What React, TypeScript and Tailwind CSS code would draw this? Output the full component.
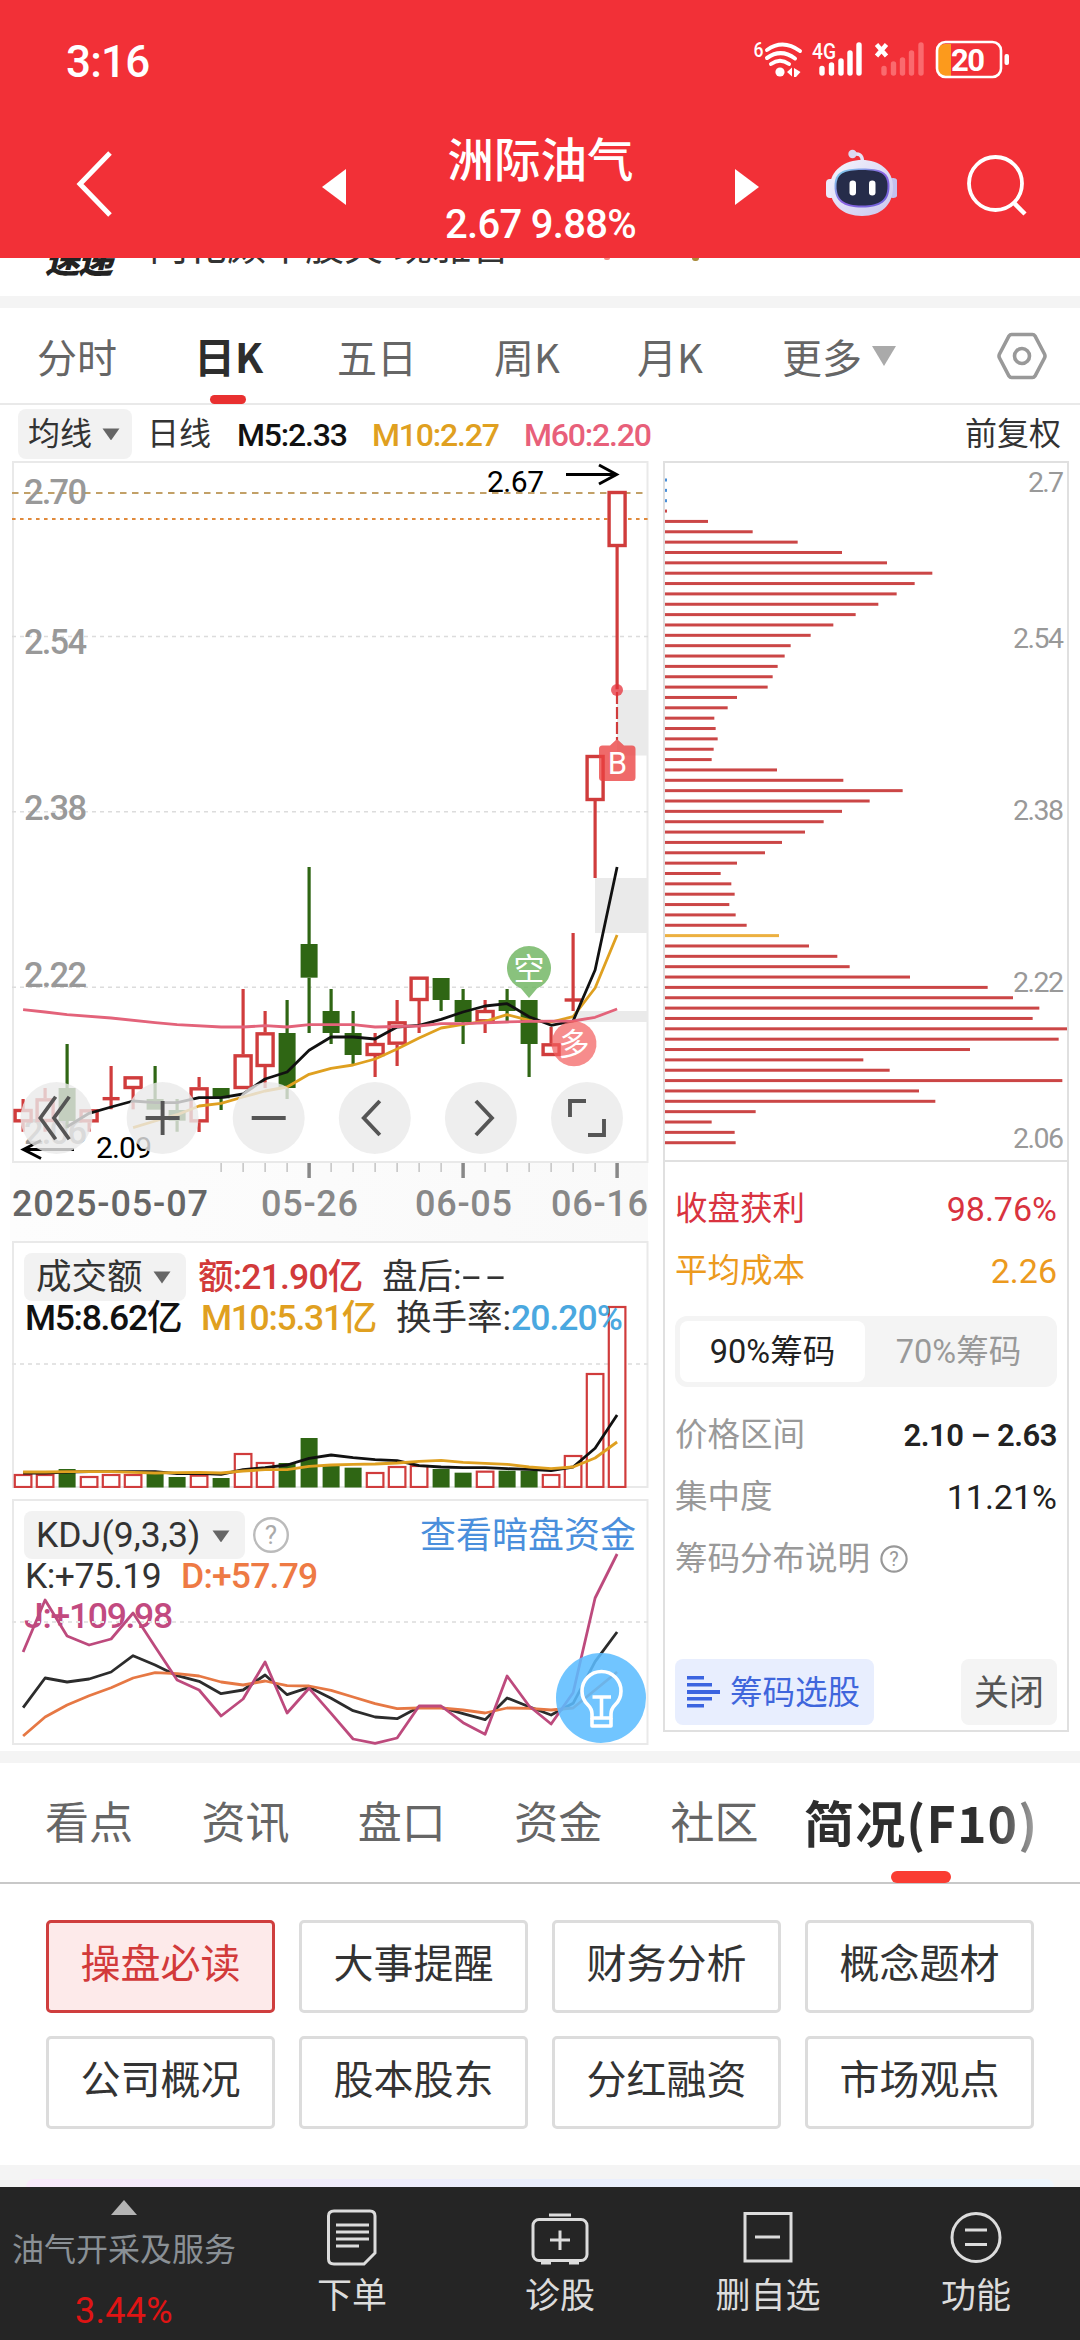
import React from "react";

/* ---------- chart data ---------- */

const X0 = 23.1;
const STEP = 22;
const cx = (i: number) => X0 + STEP * i;

type Candle = { up: boolean; top: number; bot: number; high: number; low: number };
const k = (up: boolean, top: number, bot: number, high = top, low = bot): Candle => ({ up, top, bot, high, low });

/* thirds of a pixel below y = 840 */
const candles: Candle[] = [
  k(true, 807, 847, 777, 875),
  k(true, 775, 846, 744, 875),
  k(false, 744, 843, 612, 865),
  k(true, 808, 847, 808, 875),
  k(true, 776, 776, 678, 808),
  k(true, 709, 747, 709, 808),
  k(false, 777, 809, 678, 809),
  k(false, 810, 842, 777, 875),
  k(true, 742, 847, 711, 876),
  k(false, 744, 775, 744, 810),
  k(true, 643, 747, 447, 747),
  k(true, 577, 681, 513, 744),
  k(false, 579, 744, 480, 777),
  k(false, 312, 413, 81, 579),
  k(false, 513, 579, 447, 612),
  k(false, 579, 645, 513, 672),
  k(true, 609, 648, 579, 711),
  k(true, 544, 614, 480, 678),
  k(true, 410, 483, 410, 579),
  k(false, 414, 480, 414, 513),
  k(false, 480, 546, 447, 612),
  k(true, 510, 547, 480, 579),
  k(false, 480, 513, 447, 544),
  k(false, 480, 612, 480, 711),
  k(true, 610, 648, 561, 648),
  k(true, 480, 480, 279, 513),
  k(true, -255, -117, -255, 114),
  k(true, -1047, -879, -1047, -452),
];

const ma60: [number, number][] = [
  [0, 509], [1, 516], [2, 524], [4, 534], [6, 548], [7, 554], [9, 561], [10, 561], [11, 557], [12, 561], [13, 554],
  [15, 554], [16, 561], [18, 558], [19, 551], [20, 551], [22, 546], [23, 544], [25, 543], [26, 532], [27, 507],
];
const ma5: [number, number][] = [
  860, 820, 801, 783, 788, 788, 773, 773, 762, 717, 696, 631, 591, 591, 597, 561, 556, 538, 516, 498, 491, 530, 556,
  543, 390, 81,
].map((v, i) => [i + 2, v]);
const ma10: [number, number][] = [
  863, 843, 824, 798, 790, 771, 753, 741, 703, 685, 675, 657, 627, 594, 564, 553, 544, 524, 541, 546, 530, 444, 285,
].map((v, i) => [i + 5, v]);

const volume: [boolean, number][] = [
  [true, 732], [true, 732], [false, 717], [true, 738], [true, 732], [true, 732], [false, 728], [false, 741],
  [true, 734], [false, 744], [true, 669], [true, 696], [false, 699], [false, 624], [false, 708], [false, 713],
  [true, 726], [true, 708], [true, 705], [false, 717], [false, 728], [true, 722], [false, 722], [false, 722],
  [true, 732], [true, 675], [true, 429], [true, 228],
];
const vol5 = [729, 729, 726, 725, 725, 725, 725, 731, 730, 733, 719, 713, 705, 685, 675, 683, 689, 692, 707, 711, 713, 713, 716, 718, 722, 711, 655, 555];
const vol10 = [726, 726, 725, 725, 725, 727, 729, 728, 727, 729, 723, 719, 719, 709, 705, 703, 702, 699, 694, 691, 697, 700, 703, 711, 716, 711, 684, 636];

const kLine = [653, 564, 576, 567, 546, 497, 525, 557, 574, 611, 600, 555, 614, 592, 625, 662, 681, 686, 651, 652, 671, 689, 624, 650, 675, 640, 515, 426];
const dLine = [738, 681, 645, 617, 593, 564, 548, 551, 558, 576, 585, 573, 587, 588, 601, 621, 641, 656, 654, 654, 660, 669, 654, 655, 660, 654, 600, 546];
const jLine = [486, 330, 438, 465, 447, 369, 470, 570, 600, 678, 627, 516, 669, 595, 670, 747, 760, 744, 648, 648, 698, 733, 558, 648, 702, 608, 324, 192];

const chipEnds = [
  48, 48, 48, 49, 174, 308, 443, 576, 711, 847, 794, 740, 685, 617, 550, 482, 422, 404, 383, 368, 353, 261, 233, 193,
  197, 203, 191, 185, 381, 580, 758, 659, 576, 521, 465, 396, 345, 261, 212, 244, 254, 238, 257, 290, 387, 477, 562,
  599, 780, 1013, 1089, 1168, 1148, 1251, 1226, 960, 640, 719, 1237, 807, 856, 317, 185, 254, 257,
];

const line = (pts: [number, number][], base: number) =>
  pts.map(([i, v]) => `${cx(i).toFixed(1)},${(base + v / 3).toFixed(1)}`).join(" ");
const series = (v: number[], base: number) => line(v.map((y, i) => [i, y]), base);

const RED = "#d03c3c";
const GREEN = "#2f6614";

/* ---------- small pieces ---------- */

function Caret({ size = 18, color = "#666" }: { size?: number; color?: string }) {
  return (
    <svg width={size} height={size * 0.72} viewBox="0 0 18 13">
      <path d="M0.5 0.5H17.5L9 12.5Z" fill={color} />
    </svg>
  );
}

function StatusIcons() {
  return (
    <svg width="260" height="48" viewBox="752 36 260 48" fontFamily="Roboto, sans-serif">
      <text x="753.5" y="57" fontSize="20" fontWeight="500" fill="#fff" textLength="10" lengthAdjust="spacingAndGlyphs">6</text>
      <g fill="none" stroke="#fff" strokeWidth="4" strokeLinecap="round">
        <path d="M767 50Q783 38.500 800 51" />
        <path d="M767 58Q781 48 795 58.500" />
        <path d="M771 64Q780 57.500 789 64" />
      </g>
      <circle cx="780" cy="72" r="4.600" fill="#fff" />
      <path d="M787 72l5-4.500v9zM794 68l6.500 4-4.500 5h-2z" fill="#fff" />
      <text x="812" y="59" fontSize="22" fontWeight="500" fill="#fff" textLength="24" lengthAdjust="spacingAndGlyphs">4G</text>
      <g stroke="#fff" strokeWidth="5.400" strokeLinecap="round">
        <path d="M822 68.500v4.500M831.500 65v8M841 61v12M850 53v20M859 45v28" />
      </g>
      <path d="M876.500 44.500l10 11.500M886.500 44.500l-10 11.500" stroke="#fff" strokeWidth="4.400" />
      <g stroke="#fa6a6e" strokeWidth="5.400" strokeLinecap="round">
        <path d="M884 68.500v4.500M893.500 64v9M902.500 60v13M911.500 53v20M921 45v28" />
      </g>
      <path d="M951 44H945a7.500 7.500 0 0 0-7.500 8V69a7.500 7.500 0 0 0 7.500 7.500h6z" fill="#fc9a1c" />
      <rect x="937" y="42" width="64" height="35" rx="8.500" fill="none" stroke="#fff" strokeWidth="2.600" />
      <text x="951" y="70.500" fontSize="31" fontWeight="700" fill="#fff" textLength="34">20</text>
      <rect x="1004.500" y="54" width="4.500" height="11" rx="2" fill="#fff" />
    </svg>
  );
}

function Robot() {
  return (
    <svg width="72" height="68" viewBox="824 149 72 68">
      <defs>
        <linearGradient id="shell" x1="0" y1="0" x2="1" y2="1">
          <stop offset="0" stopColor="#f6f5fd" />
          <stop offset="1" stopColor="#c9c6ee" />
        </linearGradient>
        <linearGradient id="visor" x1="0" y1="0" x2="1" y2="1">
          <stop offset="0" stopColor="#7fe0ee" />
          <stop offset="0.500" stopColor="#8a62e0" />
          <stop offset="1" stopColor="#6a63d8" />
        </linearGradient>
      </defs>
      <path d="M852 154.500Q861 152 861.500 161" fill="none" stroke="#e6e2f4" strokeWidth="3.500" />
      <circle cx="851.500" cy="154" r="4.200" fill="#dcd8f0" />
      <rect x="825" y="179" width="9" height="19" rx="4" fill="#eceafa" />
      <rect x="888" y="178" width="8.500" height="20" rx="4" fill="#c3c1ee" />
      <path d="M861 160C878 160 892 170 892 187C892 205 880 216 861 216C842 216 829 205 829 187C829 170 844 160 861 160Z" fill="url(#shell)" />
      <path d="M861 168.500C880 168.500 888.500 172 888.500 186C888.500 201 880 207.500 861 207.500C842 207.500 833.500 201 833.500 186C833.500 172 842 168.500 861 168.500Z" fill="url(#visor)" />
      <path d="M861 170C879 170 886.500 173.500 886.500 186C886.500 200 879 205.500 861 205.500C843 205.500 835.500 200 835.500 186C835.500 173.500 843 170 861 170Z" fill="#262c4a" />
      <rect x="848.500" y="180.500" width="6.500" height="15" rx="3.200" fill="#fff" />
      <rect x="868" y="180.500" width="6.500" height="15" rx="3.200" fill="#fff" />
    </svg>
  );
}

function Header() {
  return (
    <header className="h-[258px] bg-[#f23037] text-white">
      <div className="flex h-[120px] items-center justify-between pl-[66px] pr-[68px]">
        <span className="pt-[4px] text-[44px] font-medium leading-none tracking-[-0.8px]">3:16</span>
        <StatusIcons />
      </div>
      <div className="flex h-[138px] items-center pl-[76px]">
        <svg width="38" height="68" viewBox="0 0 38 68" className="mb-[10px]">
          <path d="M34 3L4 34L34 65" fill="none" stroke="#fff" strokeWidth="5" />
        </svg>
        <svg width="24" height="36" viewBox="0 0 24 36" className="ml-[208px] mb-[4px]">
          <path d="M24 0V36L0 18Z" fill="#fff" />
        </svg>
        <div className="flex w-[389px] flex-col items-center pt-[2px]">
          <span className="text-[46.5px] font-medium leading-[58px]">洲际油气</span>
          <span className="mt-[11px] text-[40px] font-medium leading-[48px] tracking-[-0.7px]">2.67 9.88%</span>
        </div>
        <svg width="24" height="36" viewBox="0 0 24 36" className="mb-[4px]">
          <path d="M0 0V36L24 18Z" fill="#fff" />
        </svg>
        <div className="ml-[66px] mb-[12px]">
          <Robot />
        </div>
        <svg width="62" height="62" viewBox="0 0 62 62" className="ml-[70px] mb-[7px]">
          <circle cx="28.500" cy="28.500" r="26.500" fill="none" stroke="#fff" strokeWidth="3.800" />
          <path d="M47 48L58 59" stroke="#fff" strokeWidth="4.500" />
        </svg>
      </div>
    </header>
  );
}

function NewsStrip() {
  return (
    <div className="relative flex h-[38px] items-start overflow-hidden bg-white pl-[45px] text-[#222]">
      <span className="mt-[-14px] text-[35px] font-black italic leading-[36px] tracking-[-2px]">速递</span>
      <span className="ml-[38px] mt-[-29px] text-[39px] leading-[36px] text-[#333]">内化颇丰股灾·现雅言</span>
      <i className="absolute left-[604px] top-0 h-[2px] w-[6px] rounded-b bg-[#f0908a]" />
      <i className="absolute left-[692px] top-0 h-[3px] w-[7px] rounded-b bg-[#a88a3a]" />
    </div>
  );
}

function PeriodTabs() {
  const tab = "text-[40px] leading-none text-[#666]";
  return (
    <nav className="flex h-[97px] items-center border-b-2 border-[#e9e9e9] bg-white pl-[37px] font-['Noto_Sans_CJK_SC',sans-serif]">
      <span className={`${tab} w-[157px]`}>分时</span>
      <span className="relative w-[143px] text-[41px] font-bold leading-none text-[#2d2d2d]">
        日K
        <i className="absolute left-[16px] top-[60px] h-[9px] w-[36px] rounded-full bg-[#e93030]" />
      </span>
      <span className={`${tab} w-[157px]`}>五日</span>
      <span className={`${tab} w-[143px]`}>周K</span>
      <span className={`${tab} w-[145px]`}>月K</span>
      <span className={tab}>更多</span>
      <span className="ml-[10px]">
        <svg width="24" height="20" viewBox="0 0 24 20">
          <path d="M0 0H24L12 20Z" fill="#aaa" />
        </svg>
      </span>
      <svg width="50" height="48" viewBox="0 0 50 48" className="ml-[101px]" fill="none" stroke="#999" strokeWidth="3.600">
        <path d="M14.500 2.500H35.500Q37 2.500 38 4L47.500 22Q48.500 24 47.500 26L38 44Q37 45.500 35.500 45.500H14.500Q13 45.500 12 44L2.500 26Q1.500 24 2.500 22L12 4Q13 2.500 14.500 2.500Z" />
        <circle cx="25" cy="24" r="7.500" />
      </svg>
    </nav>
  );
}

function LegendRow() {
  return (
    <div className="flex h-[56px] items-center bg-white pl-[18px] pr-[19px] pt-[2px] text-[32px] leading-none text-[#333]">
      <span className="flex h-[50px] w-[114px] items-center gap-[10px] rounded-lg bg-[#f2f2f2] pl-[10px]">
        均线 <Caret />
      </span>
      <span className="ml-[15px] w-[90px]">日线</span>
      <span className="w-[135px] pt-px font-medium tracking-[-1.2px] text-[#111]">M5:2.33</span>
      <span className="w-[152px] pt-px font-medium tracking-[-1.2px] text-[#e0a020]">M10:2.27</span>
      <span className="pt-px font-medium tracking-[-1.2px] text-[#e8607a]">M60:2.20</span>
      <span className="ml-auto">前复权</span>
    </div>
  );
}

/* ---------- charts ---------- */

function AxisLabel({ y, t }: { y: number; t: string }) {
  return (
    <text x="24" y={y} fontSize="34.500" fontWeight="500" fill="#999" textLength="63">
      {t}
    </text>
  );
}

function CandleChart() {
  const buttons = [
    <path key="a" d="M-1-25L-19 0L-1 25M15-25L-3 0L15 25" />,
    <path key="b" d="M-17 0H17M0-17V17" />,
    <path key="c" d="M-17 0H17" />,
    <path key="d" d="M5-17L-11 0L5 17" />,
    <path key="e" d="M-5-17L11 0L-5 17" />,
    <path key="f" d="M-17-1V-17H-1M17 1V17H1" />,
  ];
  return (
    <svg width="640" height="702" viewBox="10 461 640 702" className="block" fontFamily="Roboto, sans-serif">
      <rect x="13" y="462" width="634.500" height="700" fill="#fff" stroke="#e9e9e9" strokeWidth="2" />
      <g fill="#eaeaea">
        <rect x="617" y="690" width="31" height="65.500" />
        <rect x="595" y="878" width="53" height="55" />
        <rect x="574" y="1011" width="74" height="11" />
      </g>
      <g strokeWidth="1.600" stroke="#dcdcdc" strokeDasharray="4 4">
        <path d="M12 636.500H648M12 811.800H648M12 987.300H648" />
      </g>
      <path d="M12 493H648" stroke="#c2a067" strokeWidth="2" strokeDasharray="6.500 5.500" />
      <path d="M12 519H648" stroke="#e08a3c" strokeWidth="2" strokeDasharray="3.600 4.400" />
      <AxisLabel y={504} t="2.70" />
      <AxisLabel y={653.5} t="2.54" />
      <AxisLabel y={819.5} t="2.38" />
      <AxisLabel y={986.5} t="2.22" />
      <AxisLabel y={1144} t="2.06" />

      {candles.map((c, i) => {
        const x = cx(i);
        const y = (v: number) => 840 + v / 3;
        const color = c.up ? RED : GREEN;
        return (
          <g key={i} stroke={color} strokeWidth="3.400">
            <path d={`M${x} ${y(c.high)}V${y(c.top)}M${x} ${y(c.bot)}V${y(c.low)}`} strokeWidth="3.200" />
            {c.top === c.bot ? (
              <path d={`M${x - 8.500} ${y(c.top)}h17`} />
            ) : c.up ? (
              <rect x={x - 8} y={y(c.top) + 1.500} width="16" height={y(c.bot) - y(c.top) - 3} fill="#fff" />
            ) : (
              <rect x={x - 8.500} y={y(c.top)} width="17" height={y(c.bot) - y(c.top)} fill={GREEN} stroke="none" />
            )}
          </g>
        );
      })}

      <g fill="none" strokeWidth="2.800" strokeLinejoin="round">
        <polyline points={line(ma10, 840)} stroke="#dfa020" />
        <polyline points={line(ma5, 840)} stroke="#111" />
        <polyline points={line(ma60, 840)} stroke="#e3637a" />
      </g>

      <text x="487" y="491.500" fontSize="30" fill="#000" textLength="57">2.67</text>
      <path d="M566 474.500H616M599 465L616.500 474.500L599 484" fill="none" stroke="#000" strokeWidth="3" />
      <text x="96" y="1158" fontSize="30" fill="#000" textLength="56">2.09</text>
      <path d="M74 1149.500H25M41 1140.500L23.500 1149.500L41 1158.500" fill="none" stroke="#000" strokeWidth="3" />

      <path d="M617 692V740" stroke={RED} strokeWidth="2.200" strokeDasharray="12 3" />
      <circle cx="617" cy="690" r="6" fill="#e5303a" opacity="0.750" />
      <g>
        <path d="M617 739L624 745.500H632Q635.500 745.500 635.500 749V777.500Q635.500 781 632 781H602.500Q599 781 599 777.500V749Q599 745.500 602.500 745.500H610Z" fill="#ea4040" opacity="0.780" />
        <text x="617.500" y="774" fontSize="31" fill="#fff" textAnchor="middle">B</text>
      </g>
      <g fontFamily="'Noto Sans CJK SC', sans-serif" fontSize="31" fill="#fff" textAnchor="middle">
        <path d="M529 998L521 988.500A22 22 0 1 1 537 988.500Z" fill="#6fb560" opacity="0.820" />
        <text x="529" y="979.500">空</text>
        <path d="M574 1020.500L580 1022A22.500 22.500 0 1 1 568 1022Z" fill="#f36060" opacity="0.720" />
        <text x="574" y="1054.500">多</text>
      </g>

      {buttons.map((icon, i) => (
        <g key={i} transform={`translate(${56.500 + 106.100 * i} 1118)`}>
          <circle r="36" fill="#eaeaea" opacity="0.800" />
          <g transform={i === 0 ? "scale(0.85)" : undefined} fill="none" stroke="#555" strokeWidth={i === 0 ? 4.400 : 3.900}>
            {icon}
          </g>
        </g>
      ))}
    </svg>
  );
}

function DateAxis() {
  return (
    <svg width="640" height="78" viewBox="10 1163 640 78" className="block" fontFamily="Roboto, sans-serif">
      <defs>
        <linearGradient id="fade" x1="0" x2="1">
          <stop offset="0" stopColor="#fdfdfd" />
          <stop offset="1" stopColor="#f9f9f9" />
        </linearGradient>
      </defs>
      <rect x="10" y="1163" width="638" height="78" fill="url(#fade)" />
      {Array.from({ length: 19 }, (_, n) => n + 9).map((i) => {
        const major = i === 13 || i === 20 || i === 27;
        return (
          <path
            key={i}
            d={`M${cx(i)} 1163V${major ? 1178 : 1172}`}
            stroke={major ? "#888" : "#b5b5b5"}
            strokeWidth={major ? 3.500 : 1.200}
          />
        );
      })}
      <g fontSize="36" fontWeight="500" fill="#888">
        <text x="12" y="1216" fill="#666" textLength="196">2025-05-07</text>
        <text x="261" y="1216" textLength="97">05-26</text>
        <text x="415" y="1216" textLength="97">06-05</text>
        <text x="551" y="1216" textLength="97">06-16</text>
      </g>
    </svg>
  );
}

function VolumePanel() {
  return (
    <section className="relative ml-[2px] h-[247px] w-[636px] bg-white text-[35.5px] leading-none text-[#333]">
      <div className="flex flex-col pl-[12px] pt-[12px]">
        <div className="flex h-[48px] items-center">
          <span className="flex h-[48px] w-[162px] items-center gap-[10px] rounded-lg bg-[#f2f2f2] pl-[12px] pt-[1px]">
            成交额 <Caret />
          </span>
          <span className="ml-[12px] w-[184px] pt-[2px] tracking-[-0.8px] font-medium text-[#d23a3a]">额:21.90亿</span>
          <span className="pt-[2px]">盘后:</span>
          <span className="origin-left scale-x-[1.9] tracking-[3px]">--</span>
        </div>
      </div>
      <svg width="640" height="247" viewBox="10 1241 640 247" className="absolute left-[-2px] top-0">
        <path d="M13 1241V1487H647.500V1241" fill="none" stroke="#e9e9e9" strokeWidth="2" />
        <path d="M12 1242H648" stroke="#e9e9e9" strokeWidth="2" />
        <path d="M12 1364H648" stroke="#e4e4e4" strokeWidth="1.800" strokeDasharray="4 4" />
        {volume.map(([up, v], i) =>
          up ? (
            <rect key={i} x={cx(i) - 8.300} y={1231 + v / 3} width="16.600" height={256 - v / 3} fill="#fff" stroke={RED} strokeWidth="2.200" />
          ) : (
            <rect key={i} x={cx(i) - 8.500} y={1230 + v / 3} width="17" height={257.500 - v / 3} fill={GREEN} />
          ),
        )}
        <g fill="none" strokeWidth="2.800" strokeLinejoin="round">
          <polyline points={series(vol5, 1230)} stroke="#111" />
          <polyline points={series(vol10, 1230)} stroke="#dfa020" />
        </g>
      </svg>
      <div className="relative flex h-[34px] items-center pl-[13px] pt-[2px] font-medium">
        <span className="w-[176px] tracking-[-1.3px] text-[#111]">M5:8.62亿</span>
        <span className="w-[195px] tracking-[-1.3px] text-[#e0a020]">M10:5.31亿</span>
        <span className="font-normal">换手率:</span>
        <span className="tracking-[-1px] text-[#4aa8e0]">20.20%</span>
      </div>
    </section>
  );
}

function KdjPanel() {
  return (
    <section className="relative ml-[2px] mt-[11px] h-[246px] w-[636px] bg-white text-[35.5px] leading-none text-[#333]">
      <div className="flex h-[60px] items-end pl-[12px] pr-[12px]">
        <span className="flex h-[48px] w-[221px] items-center gap-[10px] rounded-lg bg-[#f2f2f2] pl-[12px] pt-[2px]">
          <span className="w-[166px] whitespace-nowrap tracking-[0.1px]">KDJ(9,3,3)</span> <Caret />
        </span>
        <svg width="38" height="38" viewBox="0 0 38 38" className="mb-[5px] ml-[7px]">
          <circle cx="19" cy="19" r="16.800" fill="none" stroke="#bbb" strokeWidth="2.400" />
          <text x="19" y="28" fontSize="26" fill="#aaa" textAnchor="middle" fontFamily="Roboto, sans-serif">?</text>
        </svg>
        <span className="mb-[5px] ml-auto text-[36px] text-[#4a8fdc]">查看暗盘资金</span>
      </div>
      <div className="flex h-[40px] items-start pl-[13px] tracking-[-0.5px]">
        <span className="w-[156px]">K:+75.19</span>
        <span className="font-medium tracking-[-0.8px] text-[#ee7a44]">D:+57.79</span>
      </div>
      <div className="pl-[12px] tracking-[-1.3px] font-medium text-[#c24a80]">J:+109.98</div>
      <svg width="640" height="247" viewBox="10 1499 640 247" className="absolute left-[-2px] top-0">
        <rect x="13" y="1500" width="634.500" height="244" fill="none" stroke="#e9e9e9" strokeWidth="2" />
        <path d="M12 1622H648" stroke="#e4e4e4" strokeWidth="1.800" strokeDasharray="4 4" />
        <g fill="none" strokeWidth="2.800" strokeLinejoin="round">
          <polyline points={series(kLine, 1490)} stroke="#2c2c2c" />
          <polyline points={series(dLine, 1490)} stroke="#e67844" />
          <polyline points={series(jLine, 1490)} stroke="#bd4a7d" />
        </g>
        <circle cx="601" cy="1698" r="45" fill="#5cbcff" opacity="0.870" />
        <g fill="none" stroke="#fff" strokeWidth="3.600" strokeLinejoin="round">
          <path d="M592 1718V1714Q592 1709 588 1705A19.500 19.500 0 1 1 615 1705Q611 1709 611 1714V1718Z" />
          <path d="M592 1718V1726H611V1718M592.500 1697H611M601.500 1697V1718" />
        </g>
      </svg>
    </section>
  );
}

function ChipPanel() {
  const row = "flex items-center justify-between";
  return (
    <section className="flex h-[1271px] w-[406px] flex-col border-2 border-[#e0e0e0] bg-white text-[32.5px] leading-none">
      <svg width="402" height="699" viewBox="665 463 402 699" className="block" fontFamily="Roboto, sans-serif">
        {chipEnds.map((e, i) => (
          <rect
            key={i}
            x="664"
            y={478.500 + i * 10.355}
            width={i < 4 ? 3 : (e - 42) / 3}
            height="3"
            fill={i < 3 ? "#4a8fd8" : i === 44 ? "#ecb040" : "#cb4646"}
          />
        ))}
        <path d="M664 1161H1068" stroke="#e0e0e0" strokeWidth="2" />
        <g fontSize="28.500" fill="#999">
          <text x="1028" y="492" textLength="36">2.7</text>
          <text x="1013" y="648" textLength="51">2.54</text>
          <text x="1013" y="820" textLength="51">2.38</text>
          <text x="1013" y="992" textLength="51">2.22</text>
          <text x="1013" y="1148" textLength="51">2.06</text>
        </g>
      </svg>
      <div className="flex flex-1 flex-col pl-[10px] pr-[10px] text-[#999]">
        <div className={`${row} mt-[15px] h-[62px] pt-[2px] text-[#d9333f]`}>
          <span>收盘获利</span>
          <span className="text-[34px]">98.76%</span>
        </div>
        <div className={`${row} h-[62px] pt-[2px] text-[#ec9a1e]`}>
          <span>平均成本</span>
          <span className="text-[34px]">2.26</span>
        </div>
        <div className="mt-[15px] flex h-[71px] rounded-xl bg-[#f4f4f4] p-[5px]">
          <span className="flex w-[185px] items-center justify-center rounded-lg bg-white pt-[2px] text-[#222]">90%筹码</span>
          <span className="flex flex-1 items-center justify-center pt-[2px]">70%筹码</span>
        </div>
        <div className={`${row} mt-[16px] h-[62px] pt-[2px]`}>
          <span>价格区间</span>
          <span className="text-[31px] font-semibold tracking-[-0.5px] text-[#222]">2.10 – 2.63</span>
        </div>
        <div className={`${row} h-[62px] pt-[2px]`}>
          <span>集中度</span>
          <span className="text-[34px] text-[#222]">11.21%</span>
        </div>
        <div className="flex h-[62px] items-center gap-[10px] pt-[2px]">
          <span>筹码分布说明</span>
          <svg width="28" height="28" viewBox="0 0 28 28">
            <circle cx="14" cy="14" r="12.600" fill="none" stroke="#999" strokeWidth="2.200" />
            <text x="14" y="21" fontSize="20" fill="#999" textAnchor="middle" fontFamily="Roboto, sans-serif">?</text>
          </svg>
        </div>
        <div className={`${row} mb-[5px] mt-auto h-[66px]`}>
          <span className="flex h-full w-[199px] items-center gap-[10px] rounded-lg bg-[#e8eefe] pl-[12px] text-[#3f66dc]">
            <svg width="33" height="32" viewBox="0 0 33 32" fill="#3b64e0">
              <path d="M0 0h17v3.600H0zM0 7h25v3.600H0zM0 14h33v4H0zM0 21h25v3.600H0zM0 28h17v3.600H0z" />
            </svg>
            <span className="pt-[2px]">筹码选股</span>
          </span>
          <span className="flex h-full w-[96px] items-center justify-center rounded-lg bg-[#f4f4f4] pt-[2px] text-[35px] text-[#555]">关闭</span>
        </div>
      </div>
    </section>
  );
}

/* ---------- lower sections ---------- */

function SectionTabs() {
  return (
    <nav className="flex h-[121px] items-center border-b-2 border-[#c8c8c8] bg-white pl-[45px] pt-[2px] text-[44px] leading-none text-[#666]">
      {["看点", "资讯", "盘口", "资金", "社区"].map((t) => (
        <span key={t} className="w-[156.4px]">{t}</span>
      ))}
      <span className="relative ml-[-23px] whitespace-nowrap text-[50px] font-bold">
        <span className="bg-linear-to-r from-[#2e2e2e] from-80% to-[#aaa] bg-clip-text font-['Noto_Sans_CJK_SC',sans-serif] tracking-[1.2px] text-transparent">简况(F10)</span>
        <i className="absolute left-[87px] top-[75px] h-[12px] w-[60px] rounded-full bg-[#fa3c32]" />
      </span>
    </nav>
  );
}

function Cards() {
  const items = ["操盘必读", "大事提醒", "财务分析", "概念题材", "公司概况", "股本股东", "分红融资", "市场观点"];
  return (
    <div className="grid h-[281px] grid-cols-4 content-start gap-x-[24px] gap-y-[23px] bg-white px-[46px] pt-[36px] text-[40px] leading-none">
      {items.map((t, i) => (
        <div
          key={t}
          className={`flex h-[93px] items-center justify-center rounded-[5px] border-[3px] pb-[3px] ${
            i === 0 ? "border-[#cf3e3e] bg-[#fdeaea] text-[#d23a3a]" : "border-[#dcdcdc] text-[#333]"
          }`}
        >
          {t}
        </div>
      ))}
    </div>
  );
}

function BottomBar() {
  const item = "flex flex-1 flex-col items-center";
  const label = "mt-[8px] text-[35px] leading-[40px]";
  return (
    <footer className="flex h-[153px] bg-[#252525] text-[#dcdcdc]">
      <div className="flex w-[248px] flex-col items-center pt-[13px]">
        <svg width="26" height="15" viewBox="0 0 26 15">
          <path d="M13 0L26 15H0Z" fill="#b4b4b4" />
        </svg>
        <span className="mt-[17px] whitespace-nowrap text-[32px] leading-[36px] text-[#8a9095]">油气开采及服务</span>
        <span className="mt-[24px] text-[36px] leading-[38px] tracking-[0.3px] text-[#e01414]">3.44%</span>
      </div>
      <div className={item}>
        <svg width="52" height="62" viewBox="0 0 52 62" className="mt-[20px]" fill="none" stroke="#dcdcdc" strokeWidth="3">
          <path d="M8 4H44Q49 4 49 9V46L38 57H8Q2.500 57 2.500 52V9Q2.500 4 8 4Z" />
          <path d="M10 18H43M10 25H43M10 32H43M10 39H33" />
        </svg>
        <span className={label}>下单</span>
      </div>
      <div className={item}>
        <svg width="58" height="62" viewBox="0 0 58 62" className="mt-[20px]" fill="none" stroke="#dcdcdc" strokeWidth="3">
          <rect x="2" y="12.500" width="54" height="41" rx="6" />
          <path d="M18 8H40M19 33H39M29 23.500V43M10 56H20M38 56H48" />
        </svg>
        <span className={label}>诊股</span>
      </div>
      <div className={item}>
        <svg width="52" height="62" viewBox="0 0 52 62" className="mt-[20px]" fill="none" stroke="#dcdcdc" strokeWidth="3">
          <path d="M3 6.500H49V54H3ZM13 30H38" />
        </svg>
        <span className={label}>删自选</span>
      </div>
      <div className={item}>
        <svg width="52" height="62" viewBox="0 0 52 62" className="mt-[20px]" fill="none" stroke="#dcdcdc" strokeWidth="3">
          <circle cx="26" cy="30.500" r="24" />
          <path d="M15 23H37M15 37.500H37" />
        </svg>
        <span className={label}>功能</span>
      </div>
    </footer>
  );
}

export default function App() {
  return (
    <div className="flex h-[2340px] w-[1080px] flex-col overflow-hidden bg-white font-['Roboto','Noto_Sans_CJK_SC',sans-serif]">
      <Header />
      <NewsStrip />
      <div className="h-[12px] bg-[#f4f4f4]" />
      <PeriodTabs />
      <LegendRow />
      <main className="flex h-[1290px] bg-white pl-[10px]">
        <div className="w-[653px]">
          <CandleChart />
          <DateAxis />
          <VolumePanel />
          <KdjPanel />
        </div>
        <ChipPanel />
      </main>
      <div className="h-[12px] bg-[#f4f4f4]" />
      <SectionTabs />
      <Cards />
      <div className="flex h-[22px] flex-col justify-end bg-[#f4f4f4] px-[26px]">
        <div className="h-[8px] rounded-t-xl bg-linear-to-r from-[#f9eafa] via-[#eaeefc] to-[#eef6fd]" />
      </div>
      <BottomBar />
    </div>
  );
}
